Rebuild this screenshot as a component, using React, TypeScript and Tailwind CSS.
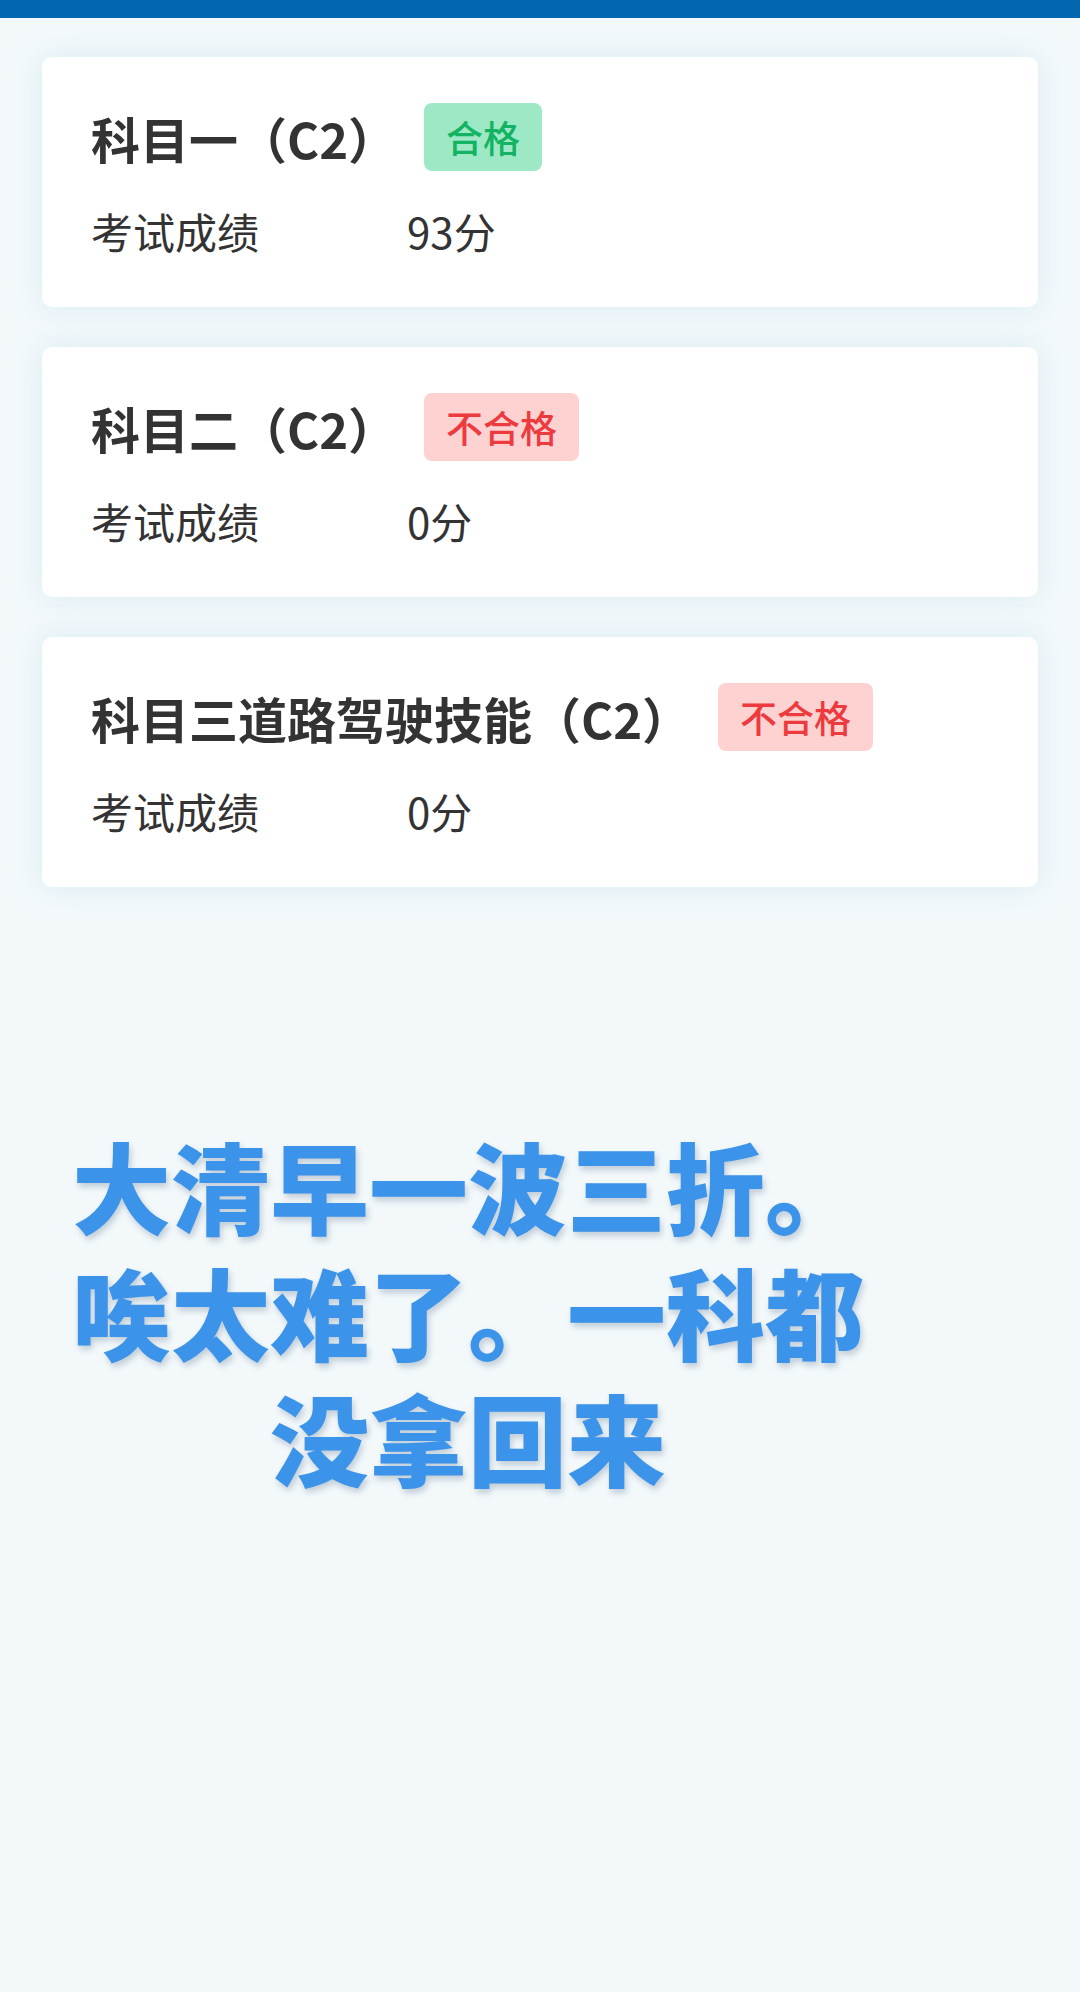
type Result = { title: string; pass: boolean; score: number }

const results: Result[] = [
  { title: '科目一（C2）', pass: true, score: 93 },
  { title: '科目二（C2）', pass: false, score: 0 },
  { title: '科目三道路驾驶技能（C2）', pass: false, score: 0 },
]

const font = { fontFamily: '"Noto Sans CJK SC", "Noto Sans", sans-serif' }

function ResultCard({ item }: { item: Result }) {
  return (
    <div className="h-[250px] rounded-[10px] bg-white pl-[49px] pt-[46px] shadow-[0_0_28px_rgba(196,224,236,0.55)]">
      <div className="flex h-[68px] items-center">
        <span className="text-[49px] font-bold leading-none text-[#333333]">{item.title}</span>
        {item.pass ? (
          <span className="ml-[27px] flex h-[68px] items-center rounded-[8px] bg-[#9ee9c5] px-[22px] text-[37px] font-medium leading-none text-[#13b363]">
            合格
          </span>
        ) : (
          <span className="ml-[27px] flex h-[68px] items-center rounded-[8px] bg-[#ffd2d2] px-[22px] text-[37px] font-medium leading-none text-[#ec3a3f]">
            不合格
          </span>
        )}
      </div>
      <div className="mt-[30px] flex h-[60px] items-center text-[42px] leading-none text-[#333333]">
        <span className="w-[316px]">考试成绩</span>
        <span>{item.score}分</span>
      </div>
    </div>
  )
}

export default function App() {
  return (
    <div className="min-h-[1992px] bg-[#f3f9fb]" style={font}>
      <div className="h-[18px] bg-[#0367b0]" />

      {/* exam results */}
      <div className="flex flex-col gap-[40px] px-[42px] pt-[39px]">
        {results.map(r => (
          <ResultCard key={r.title} item={r} />
        ))}
      </div>

      {/* caption */}
      <div className="ml-[72px] mt-[234px] w-[792px] text-center text-[99px] font-black leading-[126px] text-[#3c93ea] [text-shadow:2px_4px_6px_rgba(40,70,110,0.25)]">
        <div>大清早一波三折。</div>
        <div>唉太难了。一科都</div>
        <div>没拿回来</div>
      </div>
    </div>
  )
}
